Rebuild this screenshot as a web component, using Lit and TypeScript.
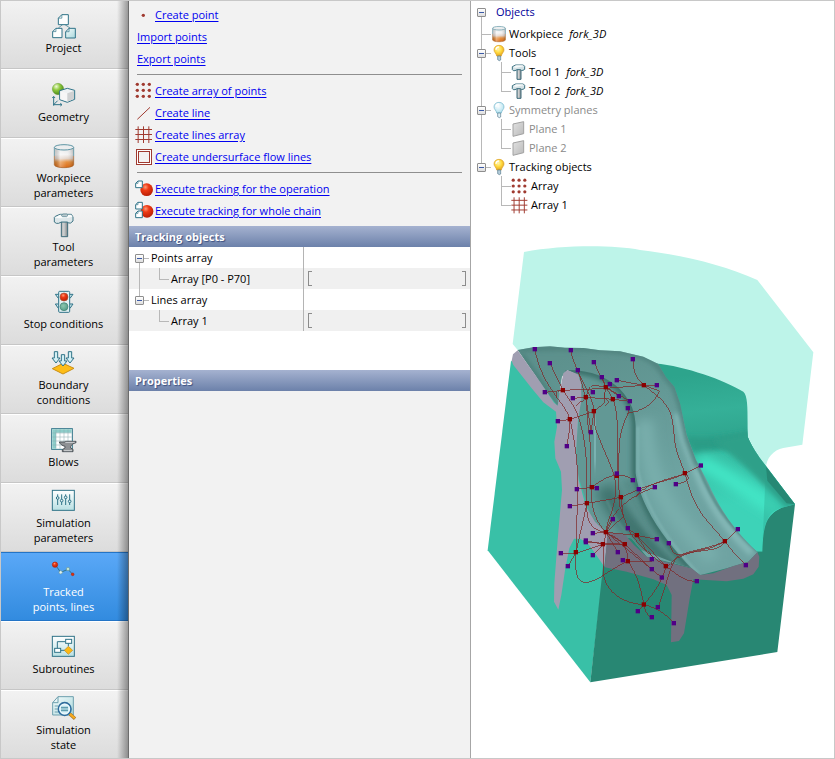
import { LitElement, html, svg, css, nothing } from "lit";
import { customElement, property } from "lit/decorators.js";
import { classMap } from "lit/directives/class-map.js";

/* ---------- icons, drawn on a grid of three units per pixel ---------- */

const gradients = svg`
  <defs>
    <linearGradient id="metal" x1="0" y1="0" x2="0" y2="1">
      <stop offset="0" stop-color="#e2e4e5"/><stop offset=".35" stop-color="#f4f3f3"/>
      <stop offset=".55" stop-color="#e3d3c8"/><stop offset=".72" stop-color="#e58a35"/>
      <stop offset="1" stop-color="#d65f05"/>
    </linearGradient>
    <linearGradient id="shine" x1="0" y1="0" x2="1" y2="0">
      <stop offset="0" stop-color="#000" stop-opacity=".16"/><stop offset=".3" stop-color="#fff" stop-opacity=".35"/>
      <stop offset=".65" stop-color="#fff" stop-opacity=".05"/><stop offset="1" stop-color="#000" stop-opacity=".22"/>
    </linearGradient>
    <radialGradient id="ball" cx=".4" cy=".3" r=".75">
      <stop offset="0" stop-color="#ff9a78"/><stop offset=".35" stop-color="#ee3a14"/><stop offset="1" stop-color="#b51c04"/>
    </radialGradient>
    <radialGradient id="leaf" cx=".35" cy=".28" r=".8">
      <stop offset="0" stop-color="#f0fbd8"/><stop offset=".4" stop-color="#8fc93e"/><stop offset="1" stop-color="#3f7f12"/>
    </radialGradient>
    <radialGradient id="jade" cx=".4" cy=".4" r=".7">
      <stop offset="0" stop-color="#8cc7b0"/><stop offset="1" stop-color="#4b9782"/>
    </radialGradient>
    <linearGradient id="pane" x1="0" y1="0" x2="1" y2="1">
      <stop offset="0" stop-color="#f6fcfc"/><stop offset="1" stop-color="#a9d8dc"/>
    </linearGradient>
    <linearGradient id="box" x1="0" y1="0" x2="0" y2="1">
      <stop offset="0" stop-color="#ffffff"/><stop offset="1" stop-color="#b9e0e3"/>
    </linearGradient>
    <linearGradient id="steel" x1="0" y1="0" x2="1" y2="0">
      <stop offset="0" stop-color="#b4b4b4"/><stop offset=".4" stop-color="#cfd2d3"/><stop offset="1" stop-color="#7d8487"/>
    </linearGradient>
    <linearGradient id="flat" x1="0" y1="0" x2="1" y2="1">
      <stop offset="0" stop-color="#e2e2e2"/><stop offset="1" stop-color="#b9b9b9"/>
    </linearGradient>
    <radialGradient id="glow" cx=".42" cy=".35" r=".7">
      <stop offset="0" stop-color="#fff7b0"/><stop offset=".5" stop-color="#ffd83c"/><stop offset="1" stop-color="#dd9c1c"/>
    </radialGradient>
    <radialGradient id="pale" cx=".42" cy=".35" r=".7">
      <stop offset="0" stop-color="#ffffff"/><stop offset="1" stop-color="#abdfee"/>
    </radialGradient>
  </defs>`;

const INK = "#2f7388";
const RUST = "#a03a30";

const sheet = (x: number, y: number, s: number, fill: string) => svg`
  <path d="M${x + s * 0.35} ${y}H${x + s}V${y + s}H${x}V${y + s * 0.35}Z" fill=${fill} stroke=${INK} stroke-width="3"/>
  <path d="M${x + s * 0.35} ${y}V${y + s * 0.35}H${x}" fill="none" stroke=${INK} stroke-width="2"/>`;

const cylinder = svg`
  <path d="M7 10V62C7 67 20 71 36 71S65 67 65 62V10Z" fill="url(#metal)"/>
  <path d="M7 10V62C7 67 20 71 36 71S65 67 65 62V10Z" fill="url(#shine)"/>
  <path d="M7 10V36M65 10V36" stroke="#6f9fac" stroke-width="3" fill="none"/>
  <path d="M7 36V62C7 67 20 71 36 71S65 67 65 62V36" stroke="#a4622c" stroke-width="2" fill="none"/>
  <ellipse cx="36" cy="10" rx="29" ry="8" fill="#eceeef" stroke="#5f96a5" stroke-width="3"/>`;

const hammer = svg`
  <path d="M28 26H47V71H28Z" fill="url(#steel)" stroke="#3d6b7b" stroke-width="3"/>
  <path d="M10 10L24 4H58L63 12V24L56 30H49L47 27H28L20 31H13L7 27V13Z" fill="#dde7ea" stroke="#3f7484" stroke-width="3"/>
  <path d="M9 14L22 16L46 15L62 11L57 5H24Z" fill="#fafcfc"/>
  <path d="M28 7L33 3H44L48 7L44 11H31Z" fill="#b9c9ce" stroke="#4f7f8d" stroke-width="2"/>`;

const smallHammer = svg`
  <path d="M18 16H30V46H18Z" fill="url(#steel)" stroke="#3d6b7b" stroke-width="3"/>
  <path d="M4 8L14 3H37L41 7V16L36 19H31L29 17H18L12 20H7L4 17Z" fill="#d5e2e6" stroke="#3a7080" stroke-width="3"/>
  <path d="M6 10L15 11L38 7L35 4H16Z" fill="#f6fafa"/>`;

const dots = svg`${[7, 25, 43].map((x) => [10, 28, 46].map((y) => svg`<circle cx=${x} cy=${y} r="5" fill=${RUST}/>`))}`;
const mesh = svg`<path d="M9.5 4V54M25.5 4V54M41.5 4V54M1 13.5H51M1 28.5H51M1 43.5H51" stroke=${RUST} stroke-width="3" fill="none"/>`;

const bulb = (fill: string, edge: string, base: string) => svg`
  <path d="M24 1C14 1 9 8 9 15C9 22 16 25 17 33H31C32 25 39 22 39 15C39 8 34 1 24 1Z" fill=${fill} stroke=${edge} stroke-width="2"/>
  <path d="M20 33H29V45L25 47L20 44Z" fill=${base} stroke="#55788c" stroke-width="2"/>
  <path d="M15 13C16 8 19 6 23 6" stroke="#fff" stroke-width="4" fill="none" stroke-linecap="round"/>`;

const slider = (x: number, y: number) => svg`
  <path d="M${x} 16V48" stroke=${INK} stroke-width="3"/><circle cx=${x} cy=${y} r="4" fill="#e8f5f6" stroke=${INK} stroke-width="3"/>`;

const pushArrow = (x: number, y: number) => svg`
  <path d="M${x - 5} ${y}H${x + 5}V${y + 19}H${x + 12}L${x} ${y + 34}L${x - 12} ${y + 19}H${x - 5}Z"
    fill="#d3eff4" stroke=${INK} stroke-width="3"/>`;

const ICONS: Record<string, unknown> = {
  project: svg`
    <path d="M34 30L19 42M36 30L54 42" stroke="#6a99a6" stroke-width="3"/>
    ${sheet(19, 2, 30, "#fdfefe")}${sheet(2, 43, 28, "#fdfefe")}${sheet(41, 43, 29, "url(#pane)")}`,
  geometry: svg`
    <circle cx="18" cy="18" r="17" fill="url(#leaf)" stroke="#4b8420" stroke-width="1"/>
    <path d="M23 23L46 16L68 22V49L46 58L23 50Z" fill="#eef1f2" stroke=${INK} stroke-width="3"/>
    <path d="M25 25L46 31V55L25 48Z" fill="#f6f6f6"/><path d="M46 31L66 24V47L46 56Z" fill="#cfd1d2"/>
    <path d="M5 68V42M1 45L5 40L9 45M4 65H29M25 61L30 65L25 69M5 65L17 53" stroke=${INK} stroke-width="3" fill="none"/>`,
  workpiece: cylinder,
  tool: hammer,
  smallTool: smallHammer,
  stop: svg`
    <path d="M19 13H10L19 25M54 13H63L54 25M19 42H10L19 55M54 42H63L54 55" fill="#cfeaee" stroke=${INK} stroke-width="3"/>
    <rect x="20" y="4" width="33" height="63" rx="3" fill="#e2f1f3" stroke=${INK} stroke-width="3"/>
    <circle cx="36" cy="21" r="12" fill="url(#ball)" stroke="#a5553d" stroke-width="2"/>
    <circle cx="36" cy="50" r="12" fill="url(#jade)" stroke="#3f7f74" stroke-width="2"/>`,
  boundary: svg`
    <path d="M1 53L33 37L66 52L33 69Z" fill="#fdbd18" stroke="#c98f17" stroke-width="3"/>
    ${pushArrow(12, 2)}${pushArrow(54, 2)}${pushArrow(33, 11)}`,
  blows: svg`
    <rect x="-1" y="2" width="62" height="62" fill="#fff" stroke=${INK} stroke-width="3"/>
    <path d="M1 4H59V14H12V62H1Z" fill="#8ccdc9"/>
    <path d="M12 4V62M24 4V62M36 4V50M48 4V40M1 15H59M1 27H59M1 39H59M1 51H30" stroke="#8aa9ae" stroke-width="1.5"/>
    <path d="M22 42H40V40H72V44C64 46 58 50 56 56V60L63 64V71H31V65L39 60V55C30 53 24 48 22 42Z" fill="#8e9194" stroke="#4d5459" stroke-width="3"/>
    <path d="M40 43H68M36 68H60" stroke="#d1d4d6" stroke-width="3"/>`,
  simulation: svg`
    <rect x="1" y="4" width="66" height="60" fill="url(#box)" stroke=${INK} stroke-width="3"/>
    ${slider(17, 27)}${slider(29, 35)}${slider(41, 25)}${slider(53, 37)}`,
  tracked: svg`
    <path d="M9 19L26 43L48 34L62 49" stroke=${INK} stroke-width="3" fill="none"/>
    <circle cx="9" cy="20" r="8" fill="url(#ball)" stroke="#b4240c" stroke-width="2"/>
    <circle cx="26" cy="43" r="5" fill="#e0f3ee" stroke="#6d98a0" stroke-width="2"/>
    <circle cx="48" cy="33" r="5" fill="#bfe5d6" stroke="#6d98a0" stroke-width="2"/>
    <circle cx="62" cy="49" r="4" fill="#e2320f" stroke="#b4240c" stroke-width="2"/>`,
  subroutines: svg`
    <rect x="1" y="4" width="66" height="60" fill="url(#box)" stroke=${INK} stroke-width="3"/>
    <path d="M16 40V20H40M49 24V34M25 46H40" stroke=${INK} stroke-width="3" fill="none"/>
    <rect x="41" y="13" width="18" height="12" fill="#fff" stroke=${INK} stroke-width="3"/>
    <rect x="8" y="40" width="18" height="12" fill="#fff" stroke=${INK} stroke-width="3"/>
    <path d="M49 34L62 46L49 58L37 46Z" fill="#fdb813" stroke="#b98a2b" stroke-width="2"/>`,
  state: svg`
    <path d="M18 2H64V57H2V20Z" fill="url(#pane)" stroke="#6d9fae" stroke-width="3"/>
    <path d="M18 2V20H2M8 30H18M8 39H16M8 48H18" fill="none" stroke="#6d9fae" stroke-width="3"/>
    <path d="M53 53L69 68" stroke="#a8772a" stroke-width="10"/><path d="M53 53L68 67" stroke="#f9ab1d" stroke-width="6"/>
    <circle cx="38" cy="39" r="19" fill="#d9f2f8" stroke="#2e6c9c" stroke-width="5"/>
    <circle cx="38" cy="39" r="15" fill="none" stroke="#fff" stroke-width="2"/>
    <path d="M27 35H48M27 43H48" stroke="#5d9cae" stroke-width="5"/>`,
  point: svg`<circle cx="25" cy="31" r="5" fill=${RUST}/>`,
  dots,
  line: svg`<path d="M7 49L45 13" stroke=${RUST} stroke-width="3"/>`,
  mesh,
  frame: svg`
    <rect x="4.500" y="7.500" width="45" height="45" fill="#fff" stroke=${RUST} stroke-width="3"/>
    <rect x="10.500" y="13.500" width="33" height="33" fill="#f4f2f2" stroke=${RUST} stroke-width="3"/>`,
  execute: svg`<circle cx="35" cy="32" r="19" fill="url(#ball)"/>${sheet(2, 6, 20, "#fff")}`,
  executeAll: svg`<circle cx="36" cy="31" r="19" fill="url(#ball)"/>${sheet(2, 4, 20, "#fff")}${sheet(2, 30, 20, "#fff")}`,
  bulbOn: bulb("url(#glow)", "#d99f2b", "#b5cdda"),
  bulbOff: bulb("url(#pale)", "#6fb2c9", "#dff1f7"),
  plane: svg`<path d="M6 9L38 2V38L6 46Z" fill="url(#flat)" stroke="#a2a2a2" stroke-width="3"/>`,
};

const icon = (name: string, size: number, grid: number) => html`
  <svg class="icon" width=${size} height=${size} viewBox="0 0 ${grid} ${grid}" aria-hidden="true">${gradients}${ICONS[name]}</svg>`;

const guideCss = css`
  .icon { display: block; flex: none; overflow: visible; }
  .guide { position: relative; flex: none; width: 20px; align-self: stretch; }
  .guide::before, .guide::after { content: ""; position: absolute; background: #b8b8b8; display: none; }
  .guide::before { left: 10px; width: 1px; top: 0; bottom: 0; }
  .guide::after { left: 10px; right: 0; top: 50%; height: 1px; }
  .pass::before, .tee::before, .elbow::before, .start::before { display: block; }
  .tee::after, .elbow::after, .start.dash::after { display: block; }
  .elbow::before { bottom: 50%; }
  .start::before { top: 50%; }
  .toggle {
    position: absolute; z-index: 1; left: 6px; top: 50%; width: 9px; height: 9px; margin: -4px 0 0; padding: 0;
    box-sizing: border-box; border: 1px solid #8e8e8e; border-radius: 1px;
    background: linear-gradient(#3b5aa6, #3b5aa6) center / 5px 1px no-repeat, linear-gradient(#fff, #dedede);
  }
`;

const guide = (kind: string, toggle = "") => html`
  <span class="guide ${kind}">${toggle ? html`<button class="toggle" aria-label=${`Collapse ${toggle}`}></button>` : nothing}</span>`;

/* ---------- left navigation ---------- */

@customElement("nav-item")
class NavItem extends LitElement {
  @property() icon = "";
  @property({ attribute: false }) lines: string[] = [];
  @property({ type: Boolean }) active = false;

  static styles = css`
    :host { display: block; }
    .item {
      display: flex; flex-direction: column; align-items: center; justify-content: center; gap: 2px;
      width: 100%; height: 100%; box-sizing: border-box; margin: 0; padding: 0 1px 1px 0;
      border: 0; border-top: 1px solid #fff; border-bottom: 1px solid #c6c6c6;
      background: linear-gradient(#f2f2f2, #dcdcdc);
      font: inherit; line-height: 15px; color: #000; text-align: center;
    }
    .active { color: #fff; background: linear-gradient(#5aa8f7, #328bdf); border-top-color: #2374c6; border-bottom-color: #2374c6; }
    .icon { display: block; overflow: visible; }
    .line { display: block; }
  `;

  render() {
    return html`
      <button class=${classMap({ item: true, active: this.active })}>
        ${icon(this.icon, 24, 72)}
        <span>${this.lines.map((l) => html`<span class="line">${l}</span>`)}</span>
      </button>`;
  }
}

/* ---------- tracking panel ---------- */

@customElement("tracking-panel")
class TrackingPanel extends LitElement {
  static styles = [guideCss, css`
    :host { display: block; background: #f2f2f2; }
    .links { padding: 4px 8px 4px 6px; }
    .row { display: flex; align-items: center; height: 22px; }
    .row.plain { padding-left: 2px; }
    a { padding-bottom: 2px; color: #0000f0; text-decoration: underline; text-underline-offset: 2px; white-space: nowrap; }
    hr { margin: 4px 0 5px 2px; border: 0; height: 1px; background: #8f8f8f; }
    h2 {
      margin: 0; padding: 0 6px; font-size: 11px; line-height: 21px; font-weight: 700; color: #fff;
      text-shadow: 1px 1px 1px #3c5080; background: linear-gradient(#a5b2d0, #6c81aa);
    }
    .list { min-height: 123px; background: #fff; }
    table { width: 100%; border-collapse: collapse; table-layout: fixed; }
    tr:nth-child(even) { background: #f0f0f0; }
    td, th { height: 21px; padding: 0; font-weight: 400; text-align: left; }
    th { width: 174px; border-right: 1px solid #b4b4b4; }
    .cell { display: flex; align-items: center; height: 21px; }
    .label { padding-left: 2px; }
    .range { display: flex; justify-content: space-between; padding: 0 4px; }
    .bracket { width: 3px; height: 13px; border: 1px solid #8c8c8c; }
    .open { border-right: 0; }
    .close { border-left: 0; }
  `];

  private link(name: string, text: string) {
    return html`<div class="row ${name ? "" : "plain"}">${name ? icon(name, 20, 60) : nothing}<a href="#">${text}</a></div>`;
  }

  private range() {
    return html`<div class="range"><span class="bracket open"></span><span class="bracket close"></span></div>`;
  }

  render() {
    return html`
      <div class="links">
        ${this.link("point", "Create point")}${this.link("", "Import points")}${this.link("", "Export points")}
        <hr>
        ${this.link("dots", "Create array of points")}${this.link("line", "Create line")}
        ${this.link("mesh", "Create lines array")}${this.link("frame", "Create undersurface flow lines")}
        <hr>
        ${this.link("execute", "Execute tracking for the operation")}${this.link("executeAll", "Execute tracking for whole chain")}
      </div>
      <h2>Tracking objects</h2>
      <div class="list">
        <table>
          <tr><th scope="row"><div class="cell">${guide("start dash", "Points array")}<span class="label">Points array</span></div></th><td></td></tr>
          <tr><th scope="row"><div class="cell">${guide("pass")}${guide("elbow")}<span class="label">Array [P0 - P70]</span></div></th><td>${this.range()}</td></tr>
          <tr><th scope="row"><div class="cell">${guide("elbow", "Lines array")}<span class="label">Lines array</span></div></th><td></td></tr>
          <tr><th scope="row"><div class="cell">${guide("")}${guide("elbow")}<span class="label">Array 1</span></div></th><td>${this.range()}</td></tr>
        </table>
      </div>
      <h2>Properties</h2>`;
  }
}

/* ---------- object tree ---------- */

interface Node { guides: string[]; toggle?: boolean; icon: string; size?: number; text: string; note?: string; dim?: boolean; }

const NODES: Node[] = [
  { guides: ["tee"], icon: "workpiece", text: "Workpiece", note: "fork_3D" },
  { guides: ["tee"], toggle: true, icon: "bulbOn", text: "Tools" },
  { guides: ["pass", "tee"], icon: "smallTool", text: "Tool 1", note: "fork_3D" },
  { guides: ["pass", "elbow"], icon: "smallTool", text: "Tool 2", note: "fork_3D" },
  { guides: ["tee"], toggle: true, icon: "bulbOff", text: "Symmetry planes", dim: true },
  { guides: ["pass", "tee"], icon: "plane", text: "Plane 1", dim: true },
  { guides: ["pass", "elbow"], icon: "plane", text: "Plane 2", dim: true },
  { guides: ["elbow"], toggle: true, icon: "bulbOn", text: "Tracking objects" },
  { guides: ["", "tee"], icon: "dots", size: 18, text: "Array" },
  { guides: ["", "elbow"], icon: "mesh", size: 18, text: "Array 1" },
];

const GRIDS: Record<string, number> = { workpiece: 72, dots: 56, mesh: 56 };

@customElement("object-tree")
class ObjectTree extends LitElement {
  static styles = [guideCss, css`
    :host { display: block; }
    ul { margin: 0; padding: 0; list-style: none; }
    .row { display: flex; align-items: center; height: 19px; white-space: nowrap; }
    .root { height: 24px; color: #00009a; }
    .root .text { padding: 0 0 1px 5px; }
    .text { padding-left: 2px; }
    .dim { color: #8a8a8a; }
    i { padding-left: 6px; }
  `];

  render() {
    return html`
      <ul>
        <li class="row root">${guide("start", "Objects")}<span class="text">Objects</span></li>
        ${NODES.map((n) => html`
          <li class=${classMap({ row: true, dim: !!n.dim })}>
            ${n.guides.map((g, i) => guide(g, n.toggle && i === 0 ? n.text : ""))}
            ${icon(n.icon, n.size ?? 16, GRIDS[n.icon] ?? 48)}
            <span class="text">${n.text}</span>${n.note ? html`<i>${n.note}</i>` : nothing}
          </li>`)}
      </ul>`;
  }
}

/* ---------- model view, three units per pixel ---------- */

const NODES_PURPLE = [
  [165, 328], [210, 370], [273, 331], [342, 367], [459, 358], [294, 391], [366, 412], [390, 433], [411, 421], [531, 436],
  [339, 457], [417, 469], [450, 484], [444, 505], [195, 457], [279, 475], [234, 544], [333, 577], [261, 619], [411, 701],
  [663, 677], [459, 721], [351, 745], [291, 748], [477, 748], [525, 742], [588, 733], [270, 799], [399, 838], [444, 865],
  [339, 880], [318, 902], [318, 907], [531, 898], [567, 910], [774, 868], [243, 940], [264, 979], [339, 946], [414, 937],
  [429, 961], [516, 958], [516, 988], [546, 1013], [798, 976], [651, 1024], [534, 1102], [474, 1114], [516, 1132], [582, 1150],
];

const NODES_RED = [
  [249, 451], [318, 472], [378, 442], [399, 478], [492, 436], [342, 514], [270, 538], [615, 700], [411, 708], [336, 742],
  [423, 772], [321, 790], [378, 877], [471, 886], [369, 913], [435, 913], [288, 937], [444, 964], [558, 979], [735, 904], [492, 1094],
];

const TRACKS = [
  "M165 328C172 375 195 420 215 450S262 510 270 538C276 570 290 630 292 690L293 748L288 937",
  "M210 370L249 451L282 500C305 545 318 610 320 690L321 790",
  "M273 331C275 355 285 375 294 391C305 430 318 470 325 520L333 577",
  "M294 391C300 420 340 470 342 514V548C355 605 400 680 405 720V770C400 820 380 840 378 877",
  "M342 367L378 442L399 478C412 510 413 560 413 620L412 701",
  "M366 412L378 442L417 469M390 433L378 442L450 484",
  "M459 358C460 400 470 415 492 436C540 475 560 485 575 530C585 580 580 600 592 640L615 700",
  "M411 421L492 436H531M492 436L538 453C520 495 490 510 444 520V505",
  "M195 457L249 451L378 445L492 436M279 475L318 472L399 478L450 484",
  "M318 472C325 445 330 436 345 436L378 442L372 472L387 485L374 498",
  "M234 544L270 538L342 514L372 490V460M270 538C268 560 268 590 262 605L261 619",
  "M250 451C230 450 225 462 230 475M318 472C310 482 300 484 288 498M342 514L333 577",
  "M444 520C425 560 417 590 417 640L414 701L420 800L444 865L471 886",
  "M318 472L325 570C333 590 332 690 333 742C333 810 350 850 378 877",
  "M291 748L336 742L351 745M336 742C370 715 395 705 411 706C435 704 450 712 459 721",
  "M270 799L321 790L423 772L477 748C530 725 585 718 615 700L663 677",
  "M588 733C625 725 635 715 615 700M470 770C475 745 540 722 608 704",
  "M615 700C625 740 640 790 675 835L735 904L774 868M735 904C755 930 765 945 798 976",
  "M735 904C690 925 645 928 605 943C580 948 575 930 567 910",
  "M735 904C720 940 650 925 600 947C570 960 580 975 558 979",
  "M735 904C690 930 640 930 590 955C570 975 560 1035 534 1102",
  "M558 979C545 1030 520 1060 492 1094L474 1114M558 979C600 1010 615 1025 651 1024",
  "M492 1094C495 1115 505 1130 516 1132M492 1094C540 1105 570 1135 582 1150",
  "M444 964C475 1010 480 1040 492 1094M444 964C390 985 350 1030 315 1027C280 1025 288 970 288 937",
  "M369 913V1000C380 1060 430 1090 492 1094M369 913C378 890 375 890 378 877",
  "M243 940H288L369 913L318 902M288 937L264 979M339 946L369 913L435 913L318 907",
  "M339 880L378 877L471 886L531 898M378 877L435 913",
  "M378 877C400 895 440 890 444 964H516M378 877L414 937",
  "M399 838L378 877L546 1013M435 913L516 988",
  "M471 886L558 979M471 886C490 930 530 950 516 958M444 865C460 900 500 940 558 979",
  "M378 877C390 820 450 765 525 742",
  "M321 790L288 937M321 790C318 840 330 870 378 877M423 772L430 830L378 877",
];

const FORK = "M113 330L160 322L210 319L255 323L310 324L360 331L420 334L490 350L535 372L558 412L583 440L600 490L620 585L648 660L685 730C715 800 760 870 833 937L805 965L740 985L660 1006L630 982L500 950L455 895L380 885L335 840L290 690V600L303 470L295 405L262 390L246 410L233 498L205 462Z";
const FINGER = "M256 390C330 388 385 412 420 448C455 485 466 520 467 560V700C480 800 560 910 640 990";

@customElement("model-view")
class ModelView extends LitElement {
  static styles = css`
    :host { display: block; }
    svg { display: block; width: 100%; }
    .track { fill: none; stroke: #80282a; stroke-width: 3; opacity: 0.72; shape-rendering: crispEdges; }
    .red { fill: #8b0000; }
    .purple { fill: #500086; }
    .soft { filter: blur(3px); }
    .haze { filter: blur(6px); }
    .fine { filter: blur(1px); }
  `;

  private dot(cls: string, [x, y]: number[]) {
    return svg`<rect class=${cls} x=${x - 7} y=${y - 7} width="13" height="13"/>`;
  }

  render() {
    return html`
      <svg viewBox="-27 -78 1092 1480" role="img" aria-label="fork_3D forging model">
        <defs>
          <linearGradient id="cavity" gradientUnits="userSpaceOnUse" x1="660" y1="400" x2="700" y2="800">
            <stop offset="0" stop-color="#2da48c"/><stop offset=".28" stop-color="#35b098"/>
            <stop offset=".5" stop-color="#2fa58e"/><stop offset=".62" stop-color="#37bfa5"/><stop offset="1" stop-color="#3dd3b8"/>
          </linearGradient>
          <linearGradient id="forkFill" gradientUnits="userSpaceOnUse" x1="300" y1="330" x2="560" y2="960">
            <stop offset="0" stop-color="#5d918d"/><stop offset=".35" stop-color="#659a97"/>
            <stop offset=".7" stop-color="#6ea4a2"/><stop offset="1" stop-color="#6fa3a2"/>
          </linearGradient>
          <filter id="blurWide" x="-50%" y="-50%" width="200%" height="200%"><feGaussianBlur stdDeviation="16"/></filter>
          <filter id="blurMid" x="-50%" y="-50%" width="200%" height="200%"><feGaussianBlur stdDeviation="8"/></filter>
          <filter id="blurThin" x="-50%" y="-50%" width="200%" height="200%"><feGaussianBlur stdDeviation="3"/></filter>
          <clipPath id="forkClip"><path d=${FORK}/></clipPath>
          <clipPath id="fingerClip"><path d="${FINGER}L380 890L200 700Z"/></clipPath>
          <clipPath id="cavityClip"><path d="M525 370C620 380 730 420 790 455C806 470 802 520 803 590C815 620 840 655 858 678L945 793L905 803C860 825 850 850 847 935H830L600 720Z"/></clipPath>
        </defs>
        <path d="M132 36C250 14 400 15 480 30C610 45 730 75 832 120L1000 337L967 614L910 624C880 630 858 655 858 685L790 700L700 470L530 380L300 340L113 330L98 312Z" fill="#bdf4e9"/>
        <path d="M93 362L23 931L331 1327L384 880L300 500Z" fill="#39c0a7"/>
        <path d="M858 680L945 793L892 1236L331 1327L380 880L800 900L847 800Z" fill="#288773"/>
        <g clip-path="url(#cavityClip)">
          <rect x="500" y="350" width="460" height="620" fill="url(#cavity)"/>
          <path filter="url(#blurMid)" d="M620 590C690 600 750 585 830 570V630C760 620 690 630 640 640Z" fill="#2c9c86"/>
          <path filter="url(#blurWide)" d="M655 665C720 690 780 740 900 815" fill="none" stroke="#42e6c6" stroke-width="46"/>
          <path filter="url(#blurMid)" d="M700 600L760 650C820 700 860 745 915 800L990 800L880 640L810 580Z" fill="#2da089"/>
          <path d="M858 680L945 793L905 803C870 815 855 835 848 900Z" fill="#2ba38c" opacity=".35"/>
          <path d="M858 680L945 793L920 790L862 722Z" fill="#237d6b" opacity=".7"/>
        </g>
        <path d=${FORK} fill="url(#forkFill)"/>
        <g clip-path="url(#forkClip)">
          <path filter="url(#blurMid)" d="M113 330C220 318 330 325 420 334S530 370 560 415" fill="none" stroke="#4d807b" stroke-width="14"/>
          <path filter="url(#blurWide)" d="M495 540C500 650 520 740 590 830S680 930 700 960" fill="none" stroke="#78aeac" stroke-width="50"/>
          <path filter="url(#blurMid)" d="M590 520L610 600L650 700C690 800 750 880 815 940" fill="none" stroke="#85b9b8" stroke-width="20"/>
          <path filter="url(#blurMid)" d="M558 412L583 440L603 500L625 600L655 680" fill="none" stroke="#4f837f" stroke-width="18"/>
          <path filter="url(#blurThin)" d="M655 680C700 790 740 850 835 935" fill="none" stroke="#578c88" stroke-width="8"/>
          <path filter="url(#blurMid)" d="M125 345L235 500" fill="none" stroke="#477c76" stroke-width="12"/>
          <g clip-path="url(#fingerClip)">
            <path d="${FINGER}L380 890L200 700Z" fill="#629895"/>
            <path filter="url(#blurWide)" d="M345 530L346 680" fill="none" stroke="#7db4b3" stroke-width="56"/>
            <path filter="url(#blurWide)" d="M375 740C395 800 460 880 600 980" fill="none" stroke="#3f736e" stroke-width="60"/>
            <path filter="url(#blurMid)" d="M440 720C460 820 540 920 620 980" fill="none" stroke="#588d89" stroke-width="26"/>
            <path filter="url(#blurMid)" d=${FINGER} fill="none" stroke="#3a6f69" stroke-width="24"/>
          </g>
          <path filter="url(#blurThin)" d="M474 560V690C490 790 560 900 655 1000" fill="none" stroke="#7fb4b2" stroke-width="6"/>
          <path filter="url(#blurThin)" d="M380 780C410 850 440 880 470 915" fill="none" stroke="#6d9f9a" stroke-width="3"/>
        </g>
        <path d="M95 362L99 343L113 331L180 425L222 488L233 497L240 450L250 400L262 390L293 403L303 430L304 480L294 540L288 640L296 720L318 800L345 845L384 885L373 980L345 940L322 908L300 896H282L268 925L256 985L244 1065L235 1109L222 1085L223 1030L233 900L246 750L243 695L226 655L223 605L231 560L228 515L190 487L155 445L100 375Z" fill="#a09eb1"/>
        <path d="M383 875L435 884L462 915L500 950L555 965L635 985L660 1005L700 1000L760 978L805 965L832 937L838 950L836 980L820 1003L790 1016L740 1024L640 1018L630 1070L612 1180L597 1203L573 1207L575 1065L560 1035L520 1018L440 995L374 982Z" fill="#71707f"/>
        ${TRACKS.map((d) => svg`<path class="track" d=${d}/>`)}
        ${NODES_RED.map((p) => this.dot("red", p))}
        ${NODES_PURPLE.map((p) => this.dot("purple", p))}
      </svg>`;
  }
}

/* ---------- page ---------- */

const ITEMS: [string, string[]][] = [
  ["project", ["Project"]],
  ["geometry", ["Geometry"]],
  ["workpiece", ["Workpiece", "parameters"]],
  ["tool", ["Tool", "parameters"]],
  ["stop", ["Stop conditions"]],
  ["boundary", ["Boundary", "conditions"]],
  ["blows", ["Blows"]],
  ["simulation", ["Simulation", "parameters"]],
  ["tracked", ["Tracked", "points, lines"]],
  ["subroutines", ["Subroutines"]],
  ["state", ["Simulation", "state"]],
];

@customElement("app-root")
class AppRoot extends LitElement {
  static styles = css`
    :host {
      position: relative; display: grid; grid-template-columns: 129px 342px minmax(0, 1fr); min-height: 100vh;
      background: #fff; color: #000; font: 11px "Open Sans", "Noto Sans", sans-serif;
    }
    :host::after { content: ""; position: absolute; inset: 0; border: 1px solid #c8c8c8; pointer-events: none; }
    nav {
      position: relative; display: grid; grid-auto-rows: 69px; align-content: start; box-sizing: border-box;
      border-right: 1px solid #6c6c6c; background: #e4e4e4;
    }
    nav::after {
      content: ""; position: absolute; top: 0; right: 0; bottom: 0; width: 11px; pointer-events: none;
      background: linear-gradient(90deg, rgba(0, 0, 0, 0), rgba(0, 0, 0, 0.36));
    }
    tracking-panel { border-right: 1px solid #a6a6a6; }
  `;

  render() {
    return html`
      <nav>${ITEMS.map(([name, lines]) => html`<nav-item .icon=${name} .lines=${lines} ?active=${name === "tracked"}></nav-item>`)}</nav>
      <tracking-panel></tracking-panel>
      <main><object-tree></object-tree><model-view></model-view></main>`;
  }
}
